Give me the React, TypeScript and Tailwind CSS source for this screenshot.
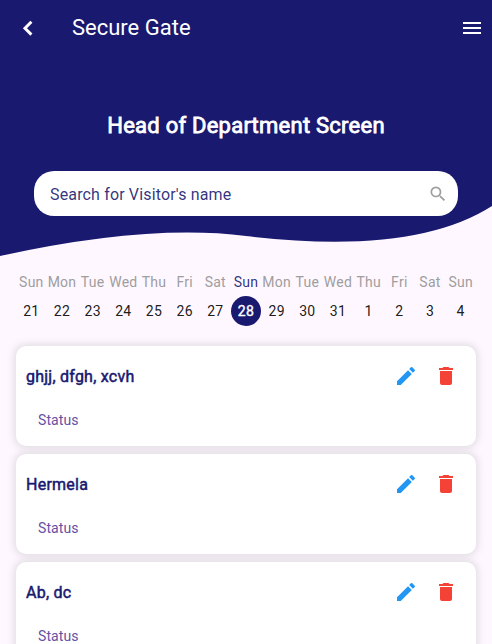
import React from "react";
import { MdDelete, MdEdit, MdMenu, MdSearch } from "react-icons/md";

const days: [string, number][] = [
  ["Sun", 21], ["Mon", 22], ["Tue", 23], ["Wed", 24], ["Thu", 25],
  ["Fri", 26], ["Sat", 27], ["Sun", 28], ["Mon", 29], ["Tue", 30],
  ["Wed", 31], ["Thu", 1], ["Fri", 2], ["Sat", 3], ["Sun", 4],
];

const visitors = ["ghjj, dfgh, xcvh", "Hermela", "Ab, dc"];

function BackIcon() {
  return (
    <svg width="30" height="30" viewBox="0 0 30 30" fill="none" stroke="currentColor" strokeWidth="3" aria-hidden="true">
      <path d="M18.4 8.8L12 15.2L18.4 21.6" />
    </svg>
  );
}

function Header() {
  return (
    <header className="relative h-[256px]">
      <svg className="absolute inset-0" width="492" height="256" viewBox="0 0 492 256" aria-hidden="true">
        <path d="M0 0V256Q148 223.5 246 236Q414 256 492 206V0Z" fill="#191970" />
      </svg>
      <div className="relative flex h-14 items-center pl-[13px] pr-2 text-white">
        <button type="button" aria-label="Back"><BackIcon /></button>
        <h1 className="ml-[29px] flex-1 text-[22px] leading-7">Secure Gate</h1>
        <button type="button" aria-label="Menu"><MdMenu size={24} /></button>
      </div>
      <h2 className="relative mt-14 text-center text-[22px] leading-7 tracking-[0.24px] text-white [-webkit-text-stroke:0.8px_white]">
        Head of Department Screen
      </h2>
      <div className="relative mx-[34px] mt-[31px] flex h-[45px] items-center rounded-[20px] bg-white pl-4 pr-[10px]">
        <span className="flex-1 pt-0.5 text-base tracking-[0.15px] text-[#191970]/90">Search for Visitor's name</span>
        <MdSearch size={20} color="#9e9e9e" />
      </div>
    </header>
  );
}

function WeekStrip() {
  return (
    <div className="mt-4 grid grid-cols-[repeat(15,minmax(0,1fr))] px-4 text-sm tracking-[0.25px]">
      {days.map(([name, date], i) => {
        const active = i === 7;
        return (
          <div key={i} className="flex flex-col items-center">
            <span className={active ? "leading-5 text-[#191970]/90" : "leading-5 text-[#9e9e9e]"}>{name}</span>
            <span
              className={
                active
                  ? "mt-1 flex size-[30px] items-center justify-center rounded-full bg-[#191970] text-white [-webkit-text-stroke:0.4px_white]"
                  : "mt-1 flex size-[30px] items-center justify-center text-black/90"
              }
            >
              {date}
            </span>
          </div>
        );
      })}
    </div>
  );
}

function VisitorCard({ name }: { name: string }) {
  return (
    <article className="h-[100px] shrink-0 rounded-[10px] bg-white pl-[10px] pr-[18px] pt-[18px] shadow-[0_0_7px_2px_rgba(128,128,128,0.22)]">
      <div className="flex h-6 items-center">
        <h3 className="flex-1 pt-0.5 text-base tracking-[0.24px] text-[#191970] [-webkit-text-stroke:0.5px_#191970]">{name}</h3>
        <button type="button" aria-label="Edit" className="mr-4"><MdEdit size={24} color="#2196f3" /></button>
        <button type="button" aria-label="Delete"><MdDelete size={24} color="#f44336" /></button>
      </div>
      <button type="button" className="ml-3 mt-[22px] block text-sm leading-5 tracking-[0.1px] text-[#6750a4]">Status</button>
    </article>
  );
}

export default function App() {
  return (
    <main className="h-[644px] w-[492px] overflow-hidden bg-[#fef7ff] font-['Roboto',sans-serif]">
      <Header />
      <WeekStrip />
      <section className="mt-5 flex flex-col gap-2 px-4">
        {visitors.map((v) => <VisitorCard key={v} name={v} />)}
      </section>
    </main>
  );
}
